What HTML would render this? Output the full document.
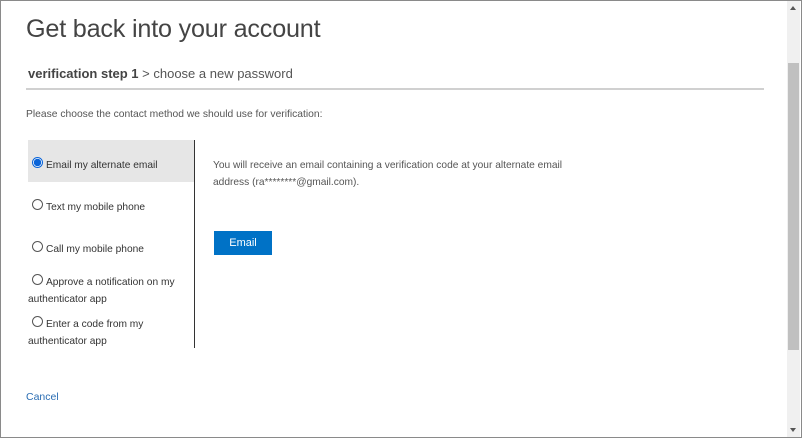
<!DOCTYPE html>
<html><head><style>
body{margin:0;width:802px;height:438px;overflow:hidden;background:#fff;font-family:"Liberation Sans",sans-serif;color:#333;position:relative}
.frame{position:absolute;left:0;top:0;width:800px;height:436px;border:1px solid #8a8a8a}
.a{position:absolute;white-space:nowrap}
.opt{position:absolute;left:28px;font-size:10.2px;color:#333;line-height:16px}
.rb{display:inline-block;width:9px;height:9px;border:1px solid #555;border-radius:50%;margin:0 3px 0 4px;vertical-align:0px;box-sizing:content-box}
</style></head><body>
<div class="frame"></div>
<div class="a" style="left:26px;top:15px;font-size:25.2px;font-weight:300;color:#444;letter-spacing:-0.2px">Get back into your account</div>
<div class="a" style="left:28px;top:66px;font-size:13px;color:#555"><b style="color:#444">verification step 1</b> &gt; choose a new password</div>
<div class="a" style="left:26px;top:88px;width:738px;height:2px;background:#d0d0d0"></div>
<div class="a" style="left:26px;top:109px;font-size:10.3px;color:#555">Please choose the contact method we should use for verification:</div>
<div class="a" style="left:28px;top:140px;width:166px;height:42px;background:#e6e6e6"></div>
<div class="a" style="left:194px;top:140px;width:1px;height:208px;background:#333"></div>
<div class="opt" style="top:157px"><span class="rb" style="border-color:#0a64d8;background:radial-gradient(circle,#0a64d8 55%,#fff 62%)"></span>Email my alternate email</div>
<div class="opt" style="top:199px"><span class="rb"></span>Text my mobile phone</div>
<div class="opt" style="top:241px"><span class="rb"></span>Call my mobile phone</div>
<div class="opt" style="top:274px;line-height:16.5px"><span class="rb"></span>Approve a notification on my<br>authenticator app</div>
<div class="opt" style="top:316px;line-height:16.5px"><span class="rb"></span>Enter a code from my<br>authenticator app</div>
<div class="a" style="left:213px;top:157px;font-size:10.2px;color:#555;line-height:17px">You will receive an email containing a verification code at your alternate email<br>address (ra********@gmail.com).</div>
<div class="a" style="left:214px;top:231px;width:58px;height:24px;background:#0072c6;color:#fff;font-size:11px;text-align:center;line-height:24px">Email</div>
<div class="a" style="left:26px;top:391px;font-size:10.5px;color:#2a6db3">Cancel</div>
<div class="a" style="left:787px;top:1px;width:13px;height:436px;background:#f0f0f0"></div>
<div class="a" style="left:788px;top:63px;width:11px;height:287px;background:#c0c0c0"></div>
<div class="a" style="left:790px;top:6px;width:0;height:0;border-left:3px solid transparent;border-right:3px solid transparent;border-bottom:4px solid #555"></div>
<div class="a" style="left:790px;top:428px;width:0;height:0;border-left:3px solid transparent;border-right:3px solid transparent;border-top:4px solid #555"></div>
</body></html>
